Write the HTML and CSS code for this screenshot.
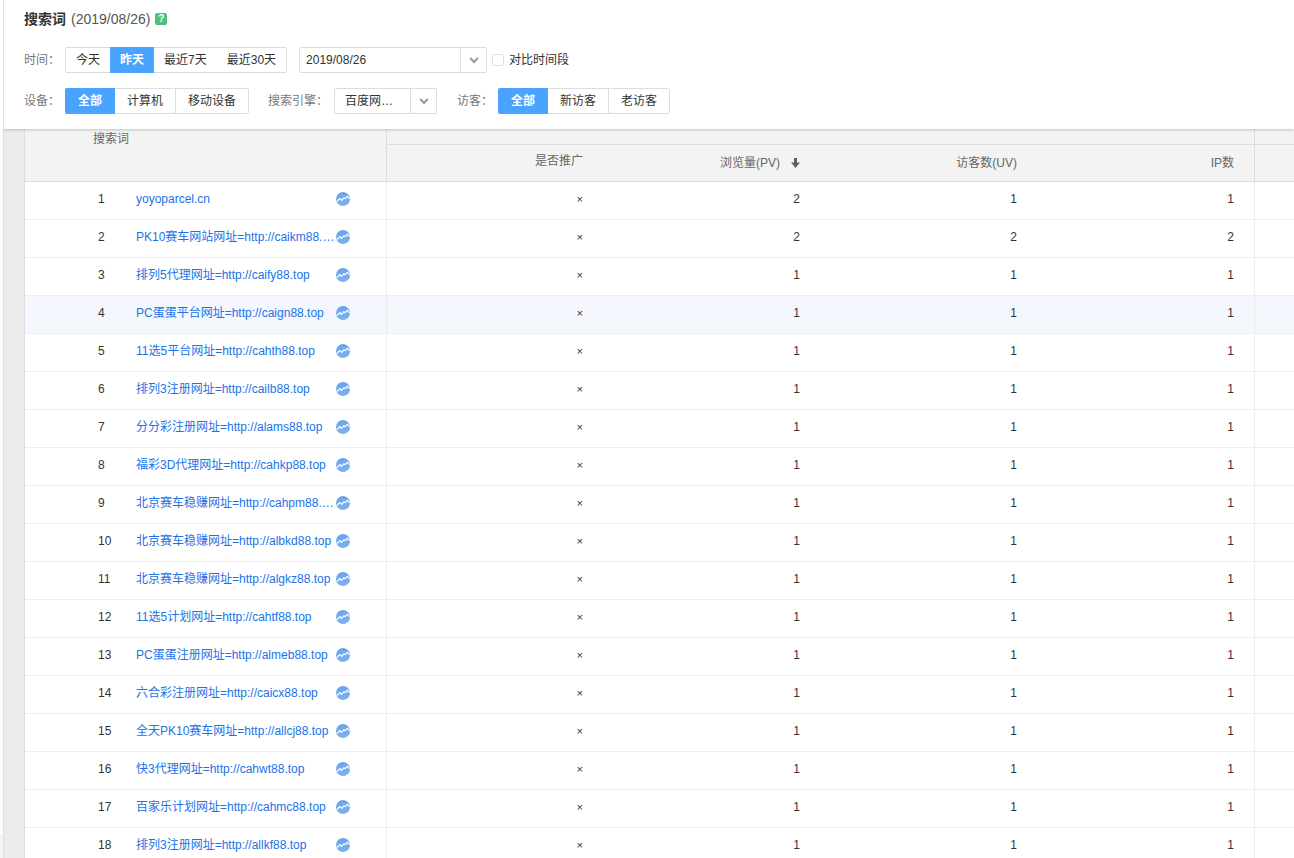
FILE: index.html
```
<!DOCTYPE html>
<html lang="zh-CN">
<head>
<meta charset="utf-8">
<title>搜索词</title>
<link rel="stylesheet" href="styles.css">
</head>
<body>
<svg class="sprite" aria-hidden="true">
  <defs>
    <linearGradient id="trend-fill" x1="0" y1="0" x2="0" y2="1">
      <stop offset="0" stop-color="#6aa3ea"/>
      <stop offset="1" stop-color="#7db2f2"/>
    </linearGradient>
    <symbol id="trend" viewBox="0 0 14 14">
      <circle cx="7" cy="7" r="7" fill="url(#trend-fill)"/>
      <path d="M1 9.500 L3.800 6.600 L5.600 8.400 L8 5.600 L9.200 6.800 L11.300 4.200 L13.400 7" fill="none" stroke="#fff" stroke-width="1.100"/>
    </symbol>
    <symbol id="chevron" viewBox="0 0 10 8">
      <path d="M1.200 2 L5 6 L8.800 2" fill="none" stroke="#999" stroke-width="2"/>
    </symbol>
  </defs>
</svg>
<div class="app">
  <div class="rail"></div>
  <main class="main">
    <header class="toolbar">
      <div class="title">
        <h1>搜索词</h1>
        <span class="title-date">(2019/08/26)</span>
        <button class="help" type="button" aria-label="帮助">?</button>
      </div>
      <div class="filters">
        <span class="label">时间：</span>
        <div class="group group-plain">
          <button type="button">今天</button><button type="button" class="on">昨天</button><button type="button">最近7天</button><button type="button">最近30天</button>
        </div>
        <div class="picker picker-date">
          <input type="text" value="2019/08/26" aria-label="日期">
          <button type="button" aria-label="选择日期"><svg><use href="#chevron"/></svg></button>
        </div>
        <label class="compare"><input type="checkbox">对比时间段</label>
      </div>
      <div class="filters">
        <span class="label">设备：</span>
        <div class="group">
          <button type="button" class="on">全部</button><button type="button">计算机</button><button type="button">移动设备</button>
        </div>
        <span class="label label-engine">搜索引擎：</span>
        <div class="picker picker-engine">
          <button type="button" class="value">百度网…</button>
          <button type="button" aria-label="选择搜索引擎"><svg><use href="#chevron"/></svg></button>
        </div>
        <span class="label label-visitor">访客：</span>
        <div class="group">
          <button type="button" class="on">全部</button><button type="button">新访客</button><button type="button">老访客</button>
        </div>
      </div>
    </header>
    <div class="content">
      <table class="report">
        <colgroup><col class="col-word"><col class="col-num"><col class="col-num"><col class="col-num"><col class="col-num"><col></colgroup>
        <thead>
          <tr class="head-top"><th class="word-head edge" rowspan="2" scope="col">搜索词</th><th class="edge" colspan="4"></th><th></th></tr>
          <tr class="head-sub">
            <th class="promo" scope="col">是否推广</th>
            <th scope="col">浏览量(PV)<svg class="sort" viewBox="0 0 9 10"><path d="M3 0H6V4.500H9L4.500 10L0 4.500H3Z" fill="#56616b"/></svg></th>
            <th scope="col">访客数(UV)</th>
            <th class="edge" scope="col">IP数</th>
            <th></th>
          </tr>
        </thead>
        <tbody>
          <tr><td class="edge"><div class="word"><span class="no">1</span><a href="#">yoyoparcel.cn</a><svg><use href="#trend"/></svg></div></td><td class="flag">×</td><td>2</td><td>1</td><td class="edge">1</td><td></td></tr>
          <tr><td class="edge"><div class="word"><span class="no">2</span><a href="#">PK10赛车网站网址=http://caikm88.…</a><svg><use href="#trend"/></svg></div></td><td class="flag">×</td><td>2</td><td>2</td><td class="edge">2</td><td></td></tr>
          <tr><td class="edge"><div class="word"><span class="no">3</span><a href="#">排列5代理网址=http://caify88.top</a><svg><use href="#trend"/></svg></div></td><td class="flag">×</td><td>1</td><td>1</td><td class="edge">1</td><td></td></tr>
          <tr class="hover"><td class="edge"><div class="word"><span class="no">4</span><a href="#">PC蛋蛋平台网址=http://caign88.top</a><svg><use href="#trend"/></svg></div></td><td class="flag">×</td><td>1</td><td>1</td><td class="edge">1</td><td></td></tr>
          <tr><td class="edge"><div class="word"><span class="no">5</span><a href="#">11选5平台网址=http://cahth88.top</a><svg><use href="#trend"/></svg></div></td><td class="flag">×</td><td>1</td><td>1</td><td class="edge">1</td><td></td></tr>
          <tr><td class="edge"><div class="word"><span class="no">6</span><a href="#">排列3注册网址=http://cailb88.top</a><svg><use href="#trend"/></svg></div></td><td class="flag">×</td><td>1</td><td>1</td><td class="edge">1</td><td></td></tr>
          <tr><td class="edge"><div class="word"><span class="no">7</span><a href="#">分分彩注册网址=http://alams88.top</a><svg><use href="#trend"/></svg></div></td><td class="flag">×</td><td>1</td><td>1</td><td class="edge">1</td><td></td></tr>
          <tr><td class="edge"><div class="word"><span class="no">8</span><a href="#">福彩3D代理网址=http://cahkp88.top</a><svg><use href="#trend"/></svg></div></td><td class="flag">×</td><td>1</td><td>1</td><td class="edge">1</td><td></td></tr>
          <tr><td class="edge"><div class="word"><span class="no">9</span><a href="#">北京赛车稳赚网址=http://cahpm88.…</a><svg><use href="#trend"/></svg></div></td><td class="flag">×</td><td>1</td><td>1</td><td class="edge">1</td><td></td></tr>
          <tr><td class="edge"><div class="word"><span class="no">10</span><a href="#">北京赛车稳赚网址=http://albkd88.top</a><svg><use href="#trend"/></svg></div></td><td class="flag">×</td><td>1</td><td>1</td><td class="edge">1</td><td></td></tr>
          <tr><td class="edge"><div class="word"><span class="no">11</span><a href="#">北京赛车稳赚网址=http://algkz88.top</a><svg><use href="#trend"/></svg></div></td><td class="flag">×</td><td>1</td><td>1</td><td class="edge">1</td><td></td></tr>
          <tr><td class="edge"><div class="word"><span class="no">12</span><a href="#">11选5计划网址=http://cahtf88.top</a><svg><use href="#trend"/></svg></div></td><td class="flag">×</td><td>1</td><td>1</td><td class="edge">1</td><td></td></tr>
          <tr><td class="edge"><div class="word"><span class="no">13</span><a href="#">PC蛋蛋注册网址=http://almeb88.top</a><svg><use href="#trend"/></svg></div></td><td class="flag">×</td><td>1</td><td>1</td><td class="edge">1</td><td></td></tr>
          <tr><td class="edge"><div class="word"><span class="no">14</span><a href="#">六合彩注册网址=http://caicx88.top</a><svg><use href="#trend"/></svg></div></td><td class="flag">×</td><td>1</td><td>1</td><td class="edge">1</td><td></td></tr>
          <tr><td class="edge"><div class="word"><span class="no">15</span><a href="#">全天PK10赛车网址=http://allcj88.top</a><svg><use href="#trend"/></svg></div></td><td class="flag">×</td><td>1</td><td>1</td><td class="edge">1</td><td></td></tr>
          <tr><td class="edge"><div class="word"><span class="no">16</span><a href="#">快3代理网址=http://cahwt88.top</a><svg><use href="#trend"/></svg></div></td><td class="flag">×</td><td>1</td><td>1</td><td class="edge">1</td><td></td></tr>
          <tr><td class="edge"><div class="word"><span class="no">17</span><a href="#">百家乐计划网址=http://cahmc88.top</a><svg><use href="#trend"/></svg></div></td><td class="flag">×</td><td>1</td><td>1</td><td class="edge">1</td><td></td></tr>
          <tr><td class="edge"><div class="word"><span class="no">18</span><a href="#">排列3注册网址=http://allkf88.top</a><svg><use href="#trend"/></svg></div></td><td class="flag">×</td><td>1</td><td>1</td><td class="edge">1</td><td></td></tr>
        </tbody>
      </table>
    </div>
  </main>
</div>
</body>
</html>
```
FILE: styles.css
```
* { box-sizing: border-box; }

body {
  margin: 0;
  font: 12px/16px "Liberation Sans", "Noto Sans CJK SC", sans-serif;
  color: #333;
}

button, input { font: inherit; color: inherit; }

button {
  margin: 0;
  padding: 0;
  border: 0;
  background: none;
  white-space: nowrap;
}

.sprite { position: absolute; width: 0; height: 0; }

.app { display: flex; height: 100vh; overflow: hidden; }

.rail {
  flex: none;
  width: 4px;
  background: linear-gradient(#fff, #fff) top / 100% calc(100% - 24px) no-repeat #f4f5f7;
  border-right: 1px solid #ddd;
}

.main { flex: 1; min-width: 0; display: flex; flex-direction: column; background: #ebebeb; }

/* Toolbar */
.toolbar {
  position: relative;
  flex: none;
  display: flex;
  flex-direction: column;
  padding: 10px 20px 15px;
  background: #fff;
  box-shadow: 0 1px 3px rgba(0, 0, 0, 0.2);
  clip-path: inset(0 0 -6px 0);
}

.title { display: flex; align-items: center; height: 18px; margin-bottom: 19px; }
.title h1 { margin: 0 5px 0 0; font-size: 14px; line-height: 18px; }
.title-date { font-size: 14px; line-height: 18px; color: #555; }

.help {
  width: 12px;
  height: 12px;
  margin-left: 5px;
  border-radius: 2px;
  background: #4fc078;
  color: #fff;
  font-size: 10px;
  font-weight: bold;
  line-height: 12px;
}

.filters { display: flex; align-items: center; height: 26px; }
.filters + .filters { margin-top: 15px; }

.label { width: 41px; color: #777; white-space: nowrap; }
.label-engine { width: 66px; margin-left: 19px; }
.label-visitor { margin-left: 20px; }

.group { display: flex; height: 26px; border: 1px solid #ddd; border-radius: 2px; }
.group button { padding: 0 12px; }
.group button + button { border-left: 1px solid #ddd; }
.group .on {
  margin: -1px 0;
  background: #4aa4ff;
  color: #fff;
  font-weight: bold;
}
.group .on:first-child { margin-left: -1px; padding: 0 13px; border-radius: 2px 0 0 2px; }
.group .on + button { border-left: 0; }
.group-plain button { padding: 0 10px; }
.group-plain button + button { border-left: 0; }

.picker { display: flex; height: 26px; border: 1px solid #ddd; border-radius: 2px; }
.picker-date { width: 188px; margin-left: 12px; }
.picker-engine { width: 103px; }
.picker input, .picker .value {
  flex: 1;
  min-width: 0;
  padding: 0 6px;
  border: 0;
  background: none;
}
.picker .value { padding: 0 10px; text-align: left; }
.picker button:last-child {
  display: flex;
  align-items: center;
  justify-content: center;
  width: 26px;
  border-left: 1px solid #ddd;
}
.picker svg { width: 10px; height: 8px; }

.compare { display: flex; align-items: center; gap: 5px; margin-left: 5px; }
.compare input {
  appearance: none;
  width: 12px;
  height: 12px;
  margin: 0;
  border: 1px solid #ddd;
  border-radius: 2px;
}

/* Report table */
.content { flex: 1; min-height: 0; padding-left: 20px; overflow: hidden; }

.report {
  width: 100%;
  table-layout: fixed;
  border-collapse: separate;
  border-spacing: 0;
  border-left: 1px solid #ddd;
  background: #fff;
}

.col-word { width: 362px; }
.col-num { width: 217px; }

.report th {
  padding: 0 21px;
  border-bottom: 1px solid #ddd;
  background: #f3f3f3;
  color: #666;
  font-weight: normal;
  text-align: right;
}
.report .edge { border-right: 1px solid #ddd; }
.report th.edge, .report td.edge { padding-right: 20px; }
.head-top { height: 16px; }
.head-sub { height: 37px; }
.report .word-head { padding: 2px 0 0 68px; text-align: left; vertical-align: top; }
.report .promo { padding-bottom: 4px; }
.sort { width: 9px; height: 10px; margin-left: 11px; vertical-align: -1px; }

.report td {
  height: 38px;
  padding: 0 21px 4px;
  border-bottom: 1px solid #ededed;
  text-align: right;
}
.report td.edge { border-right-color: #ededed; }
.report td:first-child { padding-left: 73px; }
.hover td { background: #f4f7fe; }

.word { display: flex; align-items: center; text-align: left; }
.word .no { flex: none; width: 38px; }
.word a {
  width: 200px;
  overflow: hidden;
  color: #1a73e8;
  text-decoration: none;
  text-overflow: ellipsis;
  white-space: nowrap;
}
.word svg { flex: none; width: 14px; height: 14px; }
.report .flag { font-size: 11px; }
```
